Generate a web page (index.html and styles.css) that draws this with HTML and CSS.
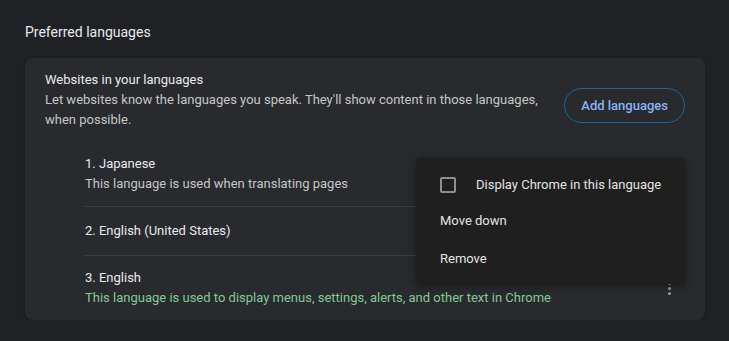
FILE: index.html
```html
<!doctype html>
<html lang="en">
  <head>
    <meta charset="UTF-8" />
    <title>Languages</title>
    <link rel="stylesheet" href="styles.css">
  </head>
  <body>
    <div class="page">
      <h2 class="section-title">Preferred languages</h2>

      <div class="card">
        <div class="card-header">
          <div class="header-text">
            <div class="primary">Websites in your languages</div>
            <div class="secondary">
              Let websites know the languages you speak. They'll show content in those languages, when possible.
            </div>
          </div>
          <button class="btn-outline">Add languages</button>
        </div>

        <ul class="lang-list">
          <li class="lang-row">
            <div class="lang-text">
              <div class="primary">1. Japanese</div>
              <div class="secondary">This language is used when translating pages</div>
            </div>
            <span class="kebab"><i></i><i></i><i></i></span>
          </li>
          <li class="lang-row">
            <div class="lang-text">
              <div class="primary">2. English (United States)</div>
            </div>
            <span class="kebab"><i></i><i></i><i></i></span>
          </li>
          <li class="lang-row">
            <div class="lang-text">
              <div class="primary">3. English</div>
              <div class="secondary ui-lang">This language is used to display menus, settings, alerts, and other text in Chrome</div>
            </div>
            <span class="kebab"><i></i><i></i><i></i></span>
          </li>
        </ul>

        <!-- open action menu for the first language -->
        <div class="menu">
          <div class="menu-item">
            <span class="checkbox"></span>
            <span>Display Chrome in this language</span>
          </div>
          <div class="menu-item">Move down</div>
          <div class="menu-item">Remove</div>
        </div>
      </div>
    </div>
  </body>
</html>
```
FILE: styles.css
```css
/* Dark settings page */
body {
  margin: 0;
  background-color: #202124;
  font-family: Roboto, "Liberation Sans", sans-serif;
  font-size: 13px;
  line-height: 20px;
  color: #e8eaed;
}
.page {
  padding: 22px 24px 0 25px;
}
.section-title {
  margin: 0 0 16px;
  font-size: 14px;
  font-weight: 400;
  line-height: 20px;
  color: #e8eaed;
}
.card {
  position: relative;
  width: 680px;
  background-color: #292a2d;
  border-radius: 8px;
  box-shadow: 0 1px 3px rgba(0, 0, 0, 0.35);
}
.card-header {
  display: flex;
  padding: 12px 20px 0 20px;
}
.header-text {
  flex: 1;
  margin-right: 22px;
}
.primary {
  color: #e8eaed;
}
.secondary {
  color: #c4c7c5;
}
.btn-outline {
  align-self: flex-start;
  margin-top: 18px;
  height: 35px;
  padding: 0 16px;
  border: 1px solid #18689b;
  border-radius: 18px;
  background: transparent;
  color: #8ab4f8;
  font-family: inherit;
  font-size: 13px;
  font-weight: 500;
  cursor: pointer;
}
.lang-list {
  list-style: none;
  margin: 12px 0 0;
  padding: 0 20px 0 60px;
}
.lang-row {
  display: flex;
  align-items: center;
  min-height: 49px;
  padding: 12px 0;
  box-sizing: border-box;
  border-bottom: 1px solid #3d3e41;
}
.lang-row:last-child {
  border-bottom: none;
}
.lang-text {
  flex: 1;
}
.ui-lang {
  color: #81c995;
}
.kebab {
  display: flex;
  flex-direction: column;
  align-items: center;
  gap: 2px;
  width: 32px;
}
.kebab i {
  width: 3px;
  height: 3px;
  border-radius: 50%;
  background-color: #9aa0a6;
}
.menu {
  position: absolute;
  left: 391px;
  top: 100px;
  width: 269px;
  padding: 8px 0;
  background-color: #1f1f1f;
  border-radius: 4px;
  box-shadow: 0 2px 8px rgba(0, 0, 0, 0.45);
}
.menu-item {
  display: flex;
  align-items: center;
  height: 36px;
  padding: 0 24px;
  color: #e3e3e3;
  white-space: nowrap;
}
.menu-item:first-child {
  height: 37px;
  padding-top: 1px;
  box-sizing: border-box;
}
.menu-item:last-child {
  height: 37px;
  padding-top: 2px;
  box-sizing: border-box;
}
.checkbox {
  flex-shrink: 0;
  width: 12px;
  height: 12px;
  margin-right: 20px;
  border: 2px solid #8f8f8f;
  border-radius: 2px;
}
```
